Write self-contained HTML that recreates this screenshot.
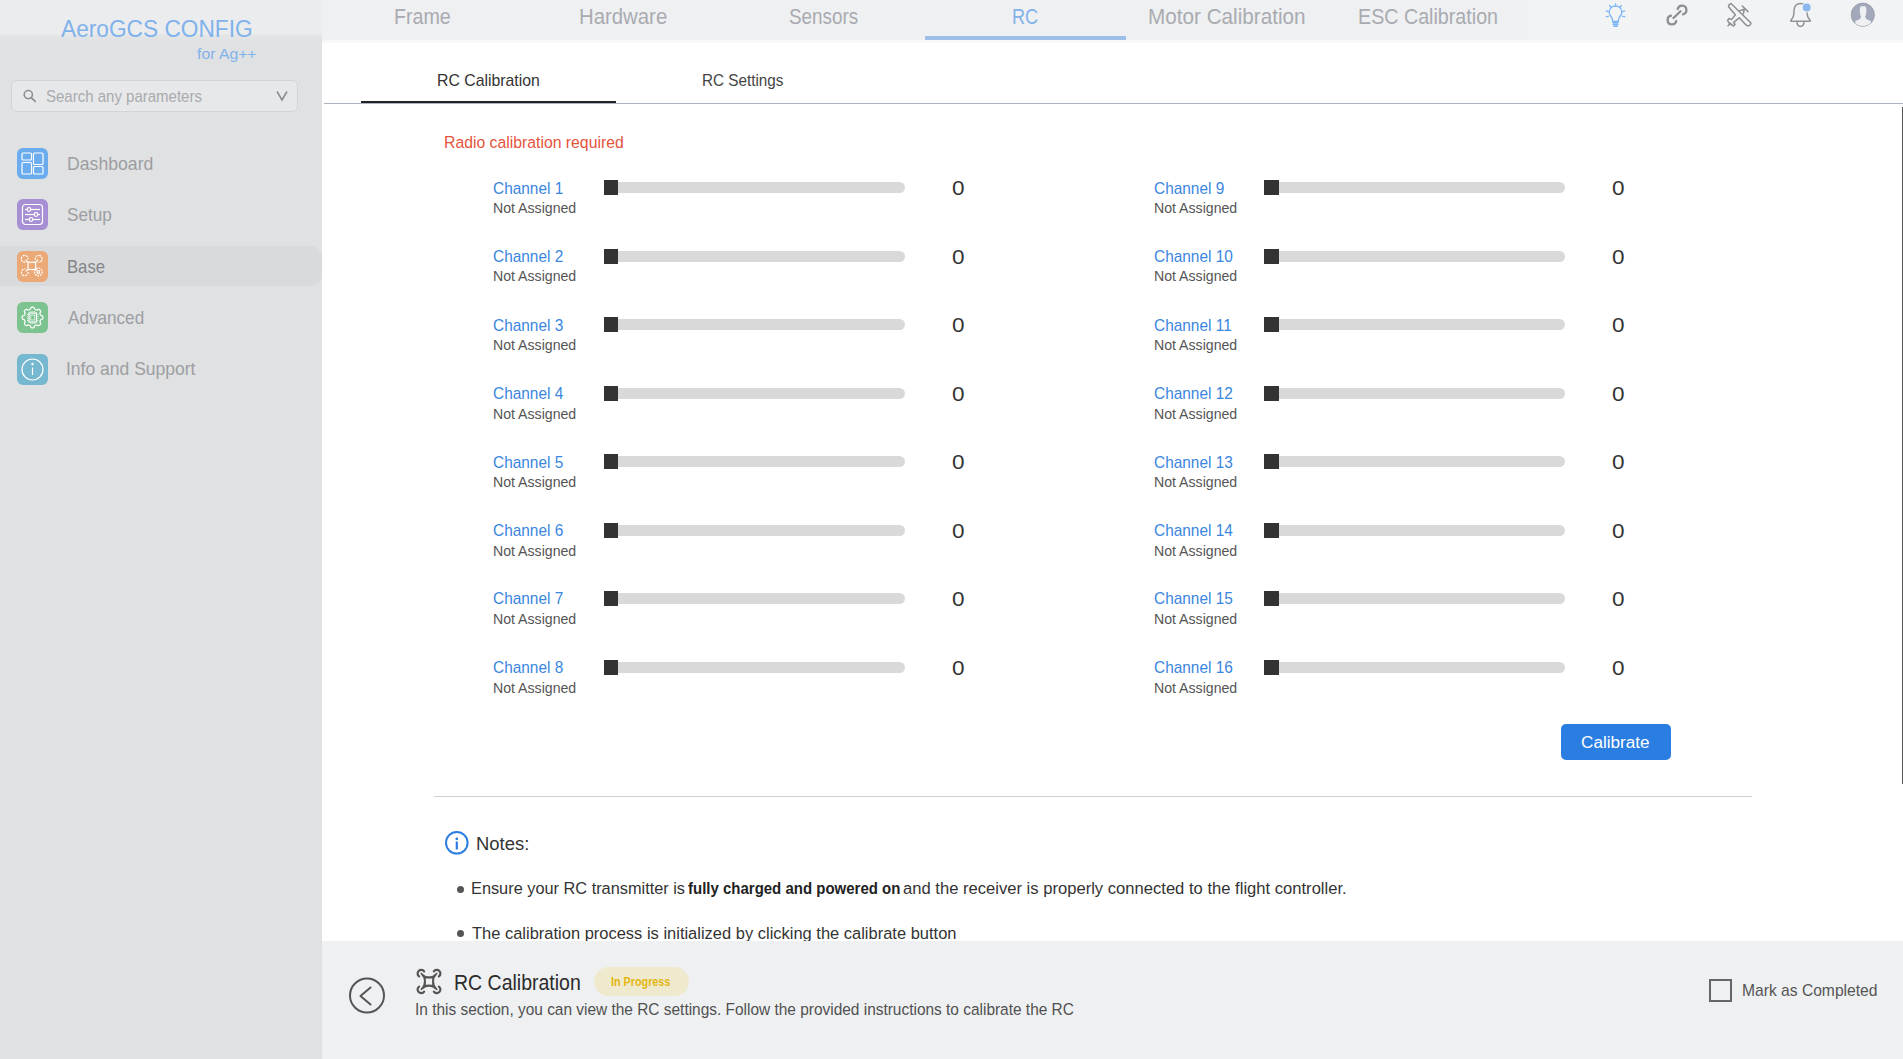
<!DOCTYPE html><html><head><meta charset="utf-8"><style>
html,body{margin:0;padding:0;width:1903px;height:1059px;overflow:hidden;background:#fff;font-family:"Liberation Sans",sans-serif}
div,svg{position:absolute}
.tx{white-space:nowrap;line-height:1;transform-origin:0 0}
b{font-weight:700}
</style></head><body>

<div style="left:0px;top:0px;width:322px;height:1059px;background:#E0E1E3"></div>
<div style="left:0px;top:0px;width:322px;height:34px;background:#EBECEE"></div>
<div style="left:0px;top:34px;width:322px;height:6px;background:linear-gradient(#E6E7E9,#E1E2E4)"></div>
<div style="left:11px;top:80px;width:285px;height:30px;background:#E7E8EA;border:1px solid #D3D4D7;border-radius:6px"></div>
<svg style="left:22px;top:89px" width="16" height="16" viewBox="0 0 16 16"><circle cx="6.3" cy="5.6" r="4.1" fill="none" stroke="#8F9093" stroke-width="1.6"/><line x1="9.2" y1="8.6" x2="13.2" y2="12.4" stroke="#8F9093" stroke-width="1.8" stroke-linecap="round"/></svg>
<svg style="left:275px;top:90px" width="14" height="12" viewBox="0 0 14 12"><polyline points="2,1.5 7,10 12,1.5" fill="none" stroke="#88898C" stroke-width="1.5"/></svg>
<div style="left:0px;top:246px;width:322px;height:40px;background:#D9DADC;border-radius:0 12px 12px 0"></div>
<div style="left:17px;top:148px;width:31px;height:31px;background:#6AACEE;border-radius:6px"></div>
<svg style="left:17px;top:148px" width="31" height="31" viewBox="0 0 31 31" fill="none" stroke="#fff" stroke-width="1.2"><rect x="5" y="5" width="9.5" height="7" rx="1"/><rect x="5" y="14.5" width="9.5" height="11.5" rx="1"/><rect x="16.5" y="5" width="9.5" height="11.5" rx="1"/><rect x="16.5" y="18.5" width="9.5" height="7.5" rx="1"/></svg>
<div style="left:17px;top:199px;width:31px;height:31px;background:#A78FD4;border-radius:6px"></div>
<svg style="left:17px;top:199px" width="31" height="31" viewBox="0 0 31 31" fill="none" stroke="#fff" stroke-width="1.2"><rect x="5.5" y="5.5" width="20" height="20" rx="3"/><line x1="8" y1="10.5" x2="23" y2="10.5"/><line x1="8" y1="15.5" x2="23" y2="15.5"/><line x1="8" y1="20.5" x2="23" y2="20.5"/><circle cx="12" cy="10.5" r="1.8" fill="#A78FD4"/><circle cx="19" cy="15.5" r="1.8" fill="#A78FD4"/><circle cx="14" cy="20.5" r="1.8" fill="#A78FD4"/></svg>
<div style="left:17px;top:251px;width:31px;height:31px;background:#EBA977;border-radius:6px"></div>
<svg style="left:17px;top:251px" width="31" height="31" viewBox="0 0 31 31" fill="none" stroke="#fff" stroke-width="1.2"><rect x="11" y="11.3" width="7.6" height="7.2"/><line x1="11" y1="11.3" x2="8.6" y2="8.6"/><line x1="18.6" y1="11.3" x2="21" y2="8.6"/><line x1="11" y1="18.5" x2="8.6" y2="20.4"/><line x1="18.6" y1="18.5" x2="19.6" y2="19.4"/><path d="M8.6 11 A3.4 3.4 0 1 1 11 8.3" stroke-dasharray="2.2 0.9"/><path d="M18.4 8.6 A3.4 3.4 0 1 1 21.3 11.2" stroke-dasharray="2.2 0.9"/><path d="M11.2 21 A3.4 3.4 0 1 1 8.4 18" stroke-dasharray="2.2 0.9"/><circle cx="21.3" cy="20.9" r="3.9" stroke-dasharray="1.8 0.8"/><circle cx="21.3" cy="20.9" r="1.4"/></svg>
<div style="left:17px;top:302px;width:31px;height:31px;background:#7DC38F;border-radius:6px"></div>
<svg style="left:17px;top:302px" width="31" height="31" viewBox="0 0 31 31" fill="none" stroke="#fff" stroke-width="1.2"><path d="M15.50 5.05 L15.77 5.06 L16.04 5.11 L16.31 5.18 L16.57 5.28 L16.83 5.42 L17.07 5.60 L17.28 5.88 L17.38 6.68 L17.55 6.96 L17.73 7.16 L17.92 7.33 L18.11 7.47 L18.30 7.59 L18.50 7.69 L18.70 7.79 L18.90 7.86 L19.11 7.93 L19.33 7.97 L19.57 8.01 L19.82 8.03 L20.09 8.01 L20.41 7.94 L21.04 7.44 L21.39 7.39 L21.69 7.43 L21.97 7.51 L22.22 7.63 L22.46 7.77 L22.69 7.93 L22.89 8.11 L23.07 8.31 L23.23 8.54 L23.37 8.78 L23.49 9.03 L23.57 9.31 L23.61 9.61 L23.56 9.96 L23.06 10.59 L22.99 10.91 L22.97 11.18 L22.99 11.43 L23.03 11.67 L23.07 11.89 L23.14 12.10 L23.21 12.30 L23.31 12.50 L23.41 12.70 L23.53 12.89 L23.67 13.08 L23.84 13.27 L24.04 13.45 L24.32 13.62 L25.12 13.72 L25.40 13.93 L25.58 14.17 L25.72 14.43 L25.82 14.69 L25.89 14.96 L25.94 15.23 L25.95 15.50 L25.94 15.77 L25.89 16.04 L25.82 16.31 L25.72 16.57 L25.58 16.83 L25.40 17.07 L25.12 17.28 L24.32 17.38 L24.04 17.55 L23.84 17.73 L23.67 17.92 L23.53 18.11 L23.41 18.30 L23.31 18.50 L23.21 18.70 L23.14 18.90 L23.07 19.11 L23.03 19.33 L22.99 19.57 L22.97 19.82 L22.99 20.09 L23.06 20.41 L23.56 21.04 L23.61 21.39 L23.57 21.69 L23.49 21.97 L23.37 22.22 L23.23 22.46 L23.07 22.69 L22.89 22.89 L22.69 23.07 L22.46 23.23 L22.22 23.37 L21.97 23.49 L21.69 23.57 L21.39 23.61 L21.04 23.56 L20.41 23.06 L20.09 22.99 L19.82 22.97 L19.57 22.99 L19.33 23.03 L19.11 23.07 L18.90 23.14 L18.70 23.21 L18.50 23.31 L18.30 23.41 L18.11 23.53 L17.92 23.67 L17.73 23.84 L17.55 24.04 L17.38 24.32 L17.28 25.12 L17.07 25.40 L16.83 25.58 L16.57 25.72 L16.31 25.82 L16.04 25.89 L15.77 25.94 L15.50 25.95 L15.23 25.94 L14.96 25.89 L14.69 25.82 L14.43 25.72 L14.17 25.58 L13.93 25.40 L13.72 25.12 L13.62 24.32 L13.45 24.04 L13.27 23.84 L13.08 23.67 L12.89 23.53 L12.70 23.41 L12.50 23.31 L12.30 23.21 L12.10 23.14 L11.89 23.07 L11.67 23.03 L11.43 22.99 L11.18 22.97 L10.91 22.99 L10.59 23.06 L9.96 23.56 L9.61 23.61 L9.31 23.57 L9.03 23.49 L8.78 23.37 L8.54 23.23 L8.31 23.07 L8.11 22.89 L7.93 22.69 L7.77 22.46 L7.63 22.22 L7.51 21.97 L7.43 21.69 L7.39 21.39 L7.44 21.04 L7.94 20.41 L8.01 20.09 L8.03 19.82 L8.01 19.57 L7.97 19.33 L7.93 19.11 L7.86 18.90 L7.79 18.70 L7.69 18.50 L7.59 18.30 L7.47 18.11 L7.33 17.92 L7.16 17.73 L6.96 17.55 L6.68 17.38 L5.88 17.28 L5.60 17.07 L5.42 16.83 L5.28 16.57 L5.18 16.31 L5.11 16.04 L5.06 15.77 L5.05 15.50 L5.06 15.23 L5.11 14.96 L5.18 14.69 L5.28 14.43 L5.42 14.17 L5.60 13.93 L5.88 13.72 L6.68 13.62 L6.96 13.45 L7.16 13.27 L7.33 13.08 L7.47 12.89 L7.59 12.70 L7.69 12.50 L7.79 12.30 L7.86 12.10 L7.93 11.89 L7.97 11.67 L8.01 11.43 L8.03 11.18 L8.01 10.91 L7.94 10.59 L7.44 9.96 L7.39 9.61 L7.43 9.31 L7.51 9.03 L7.63 8.78 L7.77 8.54 L7.93 8.31 L8.11 8.11 L8.31 7.93 L8.54 7.77 L8.78 7.63 L9.03 7.51 L9.31 7.43 L9.61 7.39 L9.96 7.44 L10.59 7.94 L10.91 8.01 L11.18 8.03 L11.43 8.01 L11.67 7.97 L11.89 7.93 L12.10 7.86 L12.30 7.79 L12.50 7.69 L12.70 7.59 L12.89 7.47 L13.08 7.33 L13.27 7.16 L13.45 6.96 L13.62 6.68 L13.72 5.88 L13.93 5.60 L14.17 5.42 L14.43 5.28 L14.69 5.18 L14.96 5.11 L15.23 5.06 L15.50 5.05Z"/><rect x="12" y="11" width="7.5" height="9"/><rect x="13.8" y="13" width="4" height="5" stroke-width="0.7"/><path d="M11.2 12.5h-1.2M11.2 14.5h-1.2M11.2 16.5h-1.2M11.2 18.5h-1.2M20.3 12.5h1.2M20.3 14.5h1.2M20.3 16.5h1.2M20.3 18.5h1.2M14 10.2v-1.2M15.8 10.2v-1.2M17.6 10.2v-1.2M14 20.8v1.2M15.8 20.8v1.2M17.6 20.8v1.2" stroke-width="0.8"/></svg>
<div style="left:17px;top:354px;width:31px;height:31px;background:#75B8CF;border-radius:6px"></div>
<svg style="left:17px;top:354px" width="31" height="31" viewBox="0 0 31 31" fill="none" stroke="#fff" stroke-width="1.2"><circle cx="15.5" cy="15.5" r="10.5"/><line x1="15.5" y1="13.5" x2="15.5" y2="21"/><circle cx="15.5" cy="10" r="0.6" fill="#fff"/></svg>
<div style="left:322px;top:0px;width:1206px;height:40px;background:#EFF0F2"></div>
<div style="left:1528px;top:0px;width:375px;height:40px;background:#F2F3F5"></div>
<div style="left:322px;top:40px;width:1581px;height:3px;background:#F8F8F9"></div>
<div style="left:925px;top:36px;width:201px;height:4px;background:#9DBFE8"></div>
<svg style="left:1595px;top:0px" width="40" height="30" viewBox="0 0 40 30" fill="none" stroke="#7DB6F5" stroke-width="1.3" stroke-linecap="round">
<path d="M17.6 21.5 v-1.2 c0 -1.6 -0.7 -2.6 -1.6 -3.8 a6.3 6.3 0 1 1 9 0 c-0.9 1.2 -1.6 2.2 -1.6 3.8 v1.2 z"/>
<path d="M18 22.8 h5 M18.2 24.6 h4.6 M18.8 26.2 h3.4" stroke-width="1.5"/>
<line x1="20.5" y1="3.8" x2="20.5" y2="6.3"/><line x1="14.6" y1="5.5" x2="16.2" y2="7.5"/><line x1="26.4" y1="5.5" x2="24.8" y2="7.5"/>
<line x1="11.3" y1="10.8" x2="13.4" y2="11.6"/><line x1="29.7" y1="10.8" x2="27.6" y2="11.6"/><line x1="11.3" y1="16.6" x2="13.4" y2="16.4"/><line x1="29.7" y1="16.6" x2="27.6" y2="16.4"/>
</svg>
<svg style="left:1663px;top:0px" width="28" height="30" viewBox="0 0 28 30" fill="none" stroke="#8E8F92" stroke-width="2.3" stroke-linecap="round">
<path d="M14.7 9 A4.4 4.4 0 1 1 20 14.3"/><path d="M13.3 21 A4.4 4.4 0 1 1 8 15.7"/><line x1="10.5" y1="18" x2="17.5" y2="11.2"/>
</svg>
<svg style="left:1720px;top:0px" width="40" height="32" viewBox="0 0 40 32" fill="none" stroke="#8E8F92" stroke-width="1.5" stroke-linejoin="round" stroke-linecap="round">
<path d="M11 3.5 L30.5 22.5 Q31.5 24 29.5 25.5 Q27.5 26.5 25.5 24.5 L19.3 17.8 L13.6 22.4 L15.1 24.2 L13.6 26 L9 23 L7.6 20.5 L9 18.4 L11.5 19.6 L15.4 14.8 Q11 10 8.5 6.5 Q8.5 4.5 11 3.5 Z"/>
<path d="M19.8 10.6 L24.2 9.3 L23.4 13.8"/><line x1="22.3" y1="6" x2="28" y2="11.6"/><line x1="8" y1="25.8" x2="10.6" y2="23.2"/>
</svg>
<svg style="left:1780px;top:0px" width="40" height="32" viewBox="0 0 40 32" fill="none" stroke="#939497" stroke-width="1.5" stroke-linejoin="round">
<path d="M20.5 3.6 c-4.4 0 -6.3 3.4 -6.5 7 l-0.3 4.2 c-0.2 1.4 -0.6 2.3 -1.3 3.3 l-1.6 2.4 v0.7 h19.4 v-0.7 l-1.6 -2.4 c-0.7 -1 -1.1 -1.9 -1.3 -3.3 l-0.3 -4.2 c-0.2 -3.6 -2.1 -7 -6.5 -7z"/>
<path d="M17 21.6 c0 3 1.6 4.9 3.5 4.9 s3.5 -1.9 3.5 -4.9"/>
<circle cx="26.7" cy="7.4" r="4.6" fill="#8AB8EE" stroke="#F2F3F5" stroke-width="1.2"/>
</svg>
<svg style="left:1848px;top:0px" width="30" height="30" viewBox="0 0 30 30">
<defs><clipPath id="avc"><circle cx="14.8" cy="14.7" r="11.3"/></clipPath></defs>
<circle cx="14.8" cy="14.7" r="11.6" fill="#A3A8BB" stroke="#9A9DA5" stroke-width="0.9"/>
<g clip-path="url(#avc)" fill="#EEF0F2"><path d="M12.2 6.6 c0.8 -0.4 4.4 -0.4 5.2 0 c1 0.6 1 3.5 0.9 6 c-0.1 1.6 -0.6 2.6 -1 3.4 c-0.2 1 0.2 2 1.2 3.2 c1.6 0.8 3.4 1.2 4.5 2.2 L23 28 H6.6 L7.2 21.4 c1.1 -1 2.9 -1.4 4.5 -2.2 c1 -1.2 1.4 -2.2 1.2 -3.2 c-0.4 -0.8 -0.9 -1.8 -1 -3.4 c-0.1 -2.5 -0.1 -5.4 0.9 -6z"/></g>
</svg>
<div style="left:324px;top:103px;width:1579px;height:1px;background:#ADB4BF"></div>
<div style="left:361px;top:101px;width:255px;height:2px;background:#222"></div>
<div style="left:604px;top:182.00px;width:301px;height:11px;background:#D9D9D9;border-radius:6px"></div>
<div style="left:604px;top:180.00px;width:14px;height:15px;background:#333"></div>
<div style="left:604px;top:250.57px;width:301px;height:11px;background:#D9D9D9;border-radius:6px"></div>
<div style="left:604px;top:248.57px;width:14px;height:15px;background:#333"></div>
<div style="left:604px;top:319.14px;width:301px;height:11px;background:#D9D9D9;border-radius:6px"></div>
<div style="left:604px;top:317.14px;width:14px;height:15px;background:#333"></div>
<div style="left:604px;top:387.71px;width:301px;height:11px;background:#D9D9D9;border-radius:6px"></div>
<div style="left:604px;top:385.71px;width:14px;height:15px;background:#333"></div>
<div style="left:604px;top:456.29px;width:301px;height:11px;background:#D9D9D9;border-radius:6px"></div>
<div style="left:604px;top:454.29px;width:14px;height:15px;background:#333"></div>
<div style="left:604px;top:524.86px;width:301px;height:11px;background:#D9D9D9;border-radius:6px"></div>
<div style="left:604px;top:522.86px;width:14px;height:15px;background:#333"></div>
<div style="left:604px;top:593.43px;width:301px;height:11px;background:#D9D9D9;border-radius:6px"></div>
<div style="left:604px;top:591.43px;width:14px;height:15px;background:#333"></div>
<div style="left:604px;top:662.00px;width:301px;height:11px;background:#D9D9D9;border-radius:6px"></div>
<div style="left:604px;top:660.00px;width:14px;height:15px;background:#333"></div>
<div style="left:1264px;top:182.00px;width:301px;height:11px;background:#D9D9D9;border-radius:6px"></div>
<div style="left:1264px;top:180.00px;width:15px;height:15px;background:#333"></div>
<div style="left:1264px;top:250.57px;width:301px;height:11px;background:#D9D9D9;border-radius:6px"></div>
<div style="left:1264px;top:248.57px;width:15px;height:15px;background:#333"></div>
<div style="left:1264px;top:319.14px;width:301px;height:11px;background:#D9D9D9;border-radius:6px"></div>
<div style="left:1264px;top:317.14px;width:15px;height:15px;background:#333"></div>
<div style="left:1264px;top:387.71px;width:301px;height:11px;background:#D9D9D9;border-radius:6px"></div>
<div style="left:1264px;top:385.71px;width:15px;height:15px;background:#333"></div>
<div style="left:1264px;top:456.29px;width:301px;height:11px;background:#D9D9D9;border-radius:6px"></div>
<div style="left:1264px;top:454.29px;width:15px;height:15px;background:#333"></div>
<div style="left:1264px;top:524.86px;width:301px;height:11px;background:#D9D9D9;border-radius:6px"></div>
<div style="left:1264px;top:522.86px;width:15px;height:15px;background:#333"></div>
<div style="left:1264px;top:593.43px;width:301px;height:11px;background:#D9D9D9;border-radius:6px"></div>
<div style="left:1264px;top:591.43px;width:15px;height:15px;background:#333"></div>
<div style="left:1264px;top:662.00px;width:301px;height:11px;background:#D9D9D9;border-radius:6px"></div>
<div style="left:1264px;top:660.00px;width:15px;height:15px;background:#333"></div>
<div style="left:1561px;top:724px;width:110px;height:36px;background:#2A7DE1;border-radius:5px"></div>
<div style="left:434px;top:796px;width:1318px;height:1px;background:#CFCFCF"></div>
<svg style="left:443px;top:829px" width="28" height="28" viewBox="0 0 28 28" fill="none"><circle cx="13.8" cy="13.8" r="10.8" stroke="#2A7DE1" stroke-width="2"/><circle cx="13.8" cy="9.8" r="1.4" fill="#2A7DE1"/><line x1="13.8" y1="12.5" x2="13.8" y2="20.5" stroke="#2A7DE1" stroke-width="2.2"/></svg>
<div style="left:457px;top:885.5px;width:7px;height:7px;border-radius:50%;background:#555"></div>
<div style="left:457px;top:930px;width:7px;height:7px;border-radius:50%;background:#555"></div>
<div style="left:1902px;top:107px;width:1px;height:677px;background:#555"></div>
<div class="tx" style="left:61.00px;top:17.18px;font-size:24.49px;color:#80B2EB;font-weight:400;transform:scaleX(0.9268);">AeroGCS CONFIG</div>
<div class="tx" style="left:197.00px;top:45.56px;font-size:15.22px;color:#80B2EB;font-weight:400;transform:scaleX(1.0351);">for Ag++</div>
<div class="tx" style="left:46.08px;top:88.28px;font-size:16.38px;color:#A9AAAD;font-weight:400;transform:scaleX(0.9172);">Search any parameters</div>
<div class="tx" style="left:66.66px;top:155.19px;font-size:18.84px;color:#9D9EA1;font-weight:400;transform:scaleX(0.9378);">Dashboard</div>
<div class="tx" style="left:66.69px;top:206.39px;font-size:18.84px;color:#9D9EA1;font-weight:400;transform:scaleX(0.9125);">Setup</div>
<div class="tx" style="left:66.81px;top:258.09px;font-size:18.84px;color:#838588;font-weight:400;transform:scaleX(0.8854);">Base</div>
<div class="tx" style="left:67.50px;top:309.39px;font-size:18.84px;color:#9D9EA1;font-weight:400;transform:scaleX(0.9096);">Advanced</div>
<div class="tx" style="left:65.84px;top:360.19px;font-size:18.84px;color:#9D9EA1;font-weight:400;transform:scaleX(0.9299);">Info and Support</div>
<div class="tx" style="left:393.64px;top:5.61px;font-size:21.16px;color:#A9ABB0;font-weight:400;transform:scaleX(0.9293);">Frame</div>
<div class="tx" style="left:578.58px;top:5.61px;font-size:21.16px;color:#A9ABB0;font-weight:400;transform:scaleX(0.9618);">Hardware</div>
<div class="tx" style="left:789.11px;top:5.61px;font-size:21.16px;color:#A9ABB0;font-weight:400;transform:scaleX(0.8921);">Sensors</div>
<div class="tx" style="left:1012.29px;top:5.61px;font-size:21.16px;color:#82B2EA;font-weight:400;transform:scaleX(0.8571);">RC</div>
<div class="tx" style="left:1147.64px;top:5.61px;font-size:21.16px;color:#A9ABB0;font-weight:400;transform:scaleX(0.9778);">Motor Calibration</div>
<div class="tx" style="left:1357.74px;top:5.61px;font-size:21.16px;color:#A9ABB0;font-weight:400;transform:scaleX(0.9306);">ESC Calibration</div>
<div class="tx" style="left:437.09px;top:72.22px;font-size:17.39px;color:#333333;font-weight:400;transform:scaleX(0.9099);">RC Calibration</div>
<div class="tx" style="left:702.12px;top:72.22px;font-size:17.39px;color:#444444;font-weight:400;transform:scaleX(0.8791);">RC Settings</div>
<div class="tx" style="left:444.05px;top:135.43px;font-size:16.67px;color:#E5533D;font-weight:400;transform:scaleX(0.9468);">Radio calibration required</div>
<div class="tx" style="left:493.11px;top:179.82px;font-size:17.39px;color:#3A86E0;font-weight:400;transform:scaleX(0.8872);">Channel 1</div>
<div class="tx" style="left:493.09px;top:199.82px;font-size:15.51px;color:#555555;font-weight:400;transform:scaleX(0.9111);">Not Assigned</div>
<div class="tx" style="left:951.69px;top:178.05px;font-size:20.29px;color:#333333;font-weight:400;transform:scaleX(1.1100);">0</div>
<div class="tx" style="left:493.11px;top:248.25px;font-size:17.39px;color:#3A86E0;font-weight:400;transform:scaleX(0.8872);">Channel 2</div>
<div class="tx" style="left:493.09px;top:268.39px;font-size:15.51px;color:#555555;font-weight:400;transform:scaleX(0.9111);">Not Assigned</div>
<div class="tx" style="left:951.69px;top:246.62px;font-size:20.29px;color:#333333;font-weight:400;transform:scaleX(1.1100);">0</div>
<div class="tx" style="left:493.11px;top:316.68px;font-size:17.39px;color:#3A86E0;font-weight:400;transform:scaleX(0.8872);">Channel 3</div>
<div class="tx" style="left:493.09px;top:336.96px;font-size:15.51px;color:#555555;font-weight:400;transform:scaleX(0.9111);">Not Assigned</div>
<div class="tx" style="left:951.69px;top:315.20px;font-size:20.29px;color:#333333;font-weight:400;transform:scaleX(1.1100);">0</div>
<div class="tx" style="left:493.11px;top:385.10px;font-size:17.39px;color:#3A86E0;font-weight:400;transform:scaleX(0.8872);">Channel 4</div>
<div class="tx" style="left:493.09px;top:405.53px;font-size:15.51px;color:#555555;font-weight:400;transform:scaleX(0.9111);">Not Assigned</div>
<div class="tx" style="left:951.69px;top:383.77px;font-size:20.29px;color:#333333;font-weight:400;transform:scaleX(1.1100);">0</div>
<div class="tx" style="left:493.11px;top:453.53px;font-size:17.39px;color:#3A86E0;font-weight:400;transform:scaleX(0.8872);">Channel 5</div>
<div class="tx" style="left:493.09px;top:474.10px;font-size:15.51px;color:#555555;font-weight:400;transform:scaleX(0.9111);">Not Assigned</div>
<div class="tx" style="left:951.69px;top:452.34px;font-size:20.29px;color:#333333;font-weight:400;transform:scaleX(1.1100);">0</div>
<div class="tx" style="left:493.11px;top:521.96px;font-size:17.39px;color:#3A86E0;font-weight:400;transform:scaleX(0.8872);">Channel 6</div>
<div class="tx" style="left:493.09px;top:542.67px;font-size:15.51px;color:#555555;font-weight:400;transform:scaleX(0.9111);">Not Assigned</div>
<div class="tx" style="left:951.69px;top:520.91px;font-size:20.29px;color:#333333;font-weight:400;transform:scaleX(1.1100);">0</div>
<div class="tx" style="left:493.11px;top:590.39px;font-size:17.39px;color:#3A86E0;font-weight:400;transform:scaleX(0.8872);">Channel 7</div>
<div class="tx" style="left:493.09px;top:611.25px;font-size:15.51px;color:#555555;font-weight:400;transform:scaleX(0.9111);">Not Assigned</div>
<div class="tx" style="left:951.69px;top:589.48px;font-size:20.29px;color:#333333;font-weight:400;transform:scaleX(1.1100);">0</div>
<div class="tx" style="left:493.11px;top:658.82px;font-size:17.39px;color:#3A86E0;font-weight:400;transform:scaleX(0.8872);">Channel 8</div>
<div class="tx" style="left:493.09px;top:679.82px;font-size:15.51px;color:#555555;font-weight:400;transform:scaleX(0.9111);">Not Assigned</div>
<div class="tx" style="left:951.69px;top:658.05px;font-size:20.29px;color:#333333;font-weight:400;transform:scaleX(1.1100);">0</div>
<div class="tx" style="left:1153.61px;top:179.82px;font-size:17.39px;color:#3A86E0;font-weight:400;transform:scaleX(0.8872);">Channel 9</div>
<div class="tx" style="left:1153.59px;top:199.82px;font-size:15.51px;color:#555555;font-weight:400;transform:scaleX(0.9111);">Not Assigned</div>
<div class="tx" style="left:1611.69px;top:178.05px;font-size:20.29px;color:#333333;font-weight:400;transform:scaleX(1.1100);">0</div>
<div class="tx" style="left:1153.61px;top:248.25px;font-size:17.39px;color:#3A86E0;font-weight:400;transform:scaleX(0.8872);">Channel 10</div>
<div class="tx" style="left:1153.59px;top:268.39px;font-size:15.51px;color:#555555;font-weight:400;transform:scaleX(0.9111);">Not Assigned</div>
<div class="tx" style="left:1611.69px;top:246.62px;font-size:20.29px;color:#333333;font-weight:400;transform:scaleX(1.1100);">0</div>
<div class="tx" style="left:1153.61px;top:316.68px;font-size:17.39px;color:#3A86E0;font-weight:400;transform:scaleX(0.8872);">Channel 11</div>
<div class="tx" style="left:1153.59px;top:336.96px;font-size:15.51px;color:#555555;font-weight:400;transform:scaleX(0.9111);">Not Assigned</div>
<div class="tx" style="left:1611.69px;top:315.20px;font-size:20.29px;color:#333333;font-weight:400;transform:scaleX(1.1100);">0</div>
<div class="tx" style="left:1153.61px;top:385.10px;font-size:17.39px;color:#3A86E0;font-weight:400;transform:scaleX(0.8872);">Channel 12</div>
<div class="tx" style="left:1153.59px;top:405.53px;font-size:15.51px;color:#555555;font-weight:400;transform:scaleX(0.9111);">Not Assigned</div>
<div class="tx" style="left:1611.69px;top:383.77px;font-size:20.29px;color:#333333;font-weight:400;transform:scaleX(1.1100);">0</div>
<div class="tx" style="left:1153.61px;top:453.53px;font-size:17.39px;color:#3A86E0;font-weight:400;transform:scaleX(0.8872);">Channel 13</div>
<div class="tx" style="left:1153.59px;top:474.10px;font-size:15.51px;color:#555555;font-weight:400;transform:scaleX(0.9111);">Not Assigned</div>
<div class="tx" style="left:1611.69px;top:452.34px;font-size:20.29px;color:#333333;font-weight:400;transform:scaleX(1.1100);">0</div>
<div class="tx" style="left:1153.61px;top:521.96px;font-size:17.39px;color:#3A86E0;font-weight:400;transform:scaleX(0.8872);">Channel 14</div>
<div class="tx" style="left:1153.59px;top:542.67px;font-size:15.51px;color:#555555;font-weight:400;transform:scaleX(0.9111);">Not Assigned</div>
<div class="tx" style="left:1611.69px;top:520.91px;font-size:20.29px;color:#333333;font-weight:400;transform:scaleX(1.1100);">0</div>
<div class="tx" style="left:1153.61px;top:590.39px;font-size:17.39px;color:#3A86E0;font-weight:400;transform:scaleX(0.8872);">Channel 15</div>
<div class="tx" style="left:1153.59px;top:611.25px;font-size:15.51px;color:#555555;font-weight:400;transform:scaleX(0.9111);">Not Assigned</div>
<div class="tx" style="left:1611.69px;top:589.48px;font-size:20.29px;color:#333333;font-weight:400;transform:scaleX(1.1100);">0</div>
<div class="tx" style="left:1153.61px;top:658.82px;font-size:17.39px;color:#3A86E0;font-weight:400;transform:scaleX(0.8872);">Channel 16</div>
<div class="tx" style="left:1153.59px;top:679.82px;font-size:15.51px;color:#555555;font-weight:400;transform:scaleX(0.9111);">Not Assigned</div>
<div class="tx" style="left:1611.69px;top:658.05px;font-size:20.29px;color:#333333;font-weight:400;transform:scaleX(1.1100);">0</div>
<div class="tx" style="left:1581.41px;top:733.94px;font-size:17.25px;color:#FFFFFF;font-weight:400;transform:scaleX(0.9941);">Calibrate</div>
<div class="tx" style="left:475.81px;top:834.51px;font-size:18.7px;color:#333333;font-weight:400;transform:scaleX(0.9863);">Notes:</div>
<div class="tx" style="left:470.65px;top:879.67px;font-size:17.1px;color:#333333;font-weight:400;transform:scaleX(0.9547);">Ensure your RC transmitter is</div>
<div class="tx" style="left:688.00px;top:879.67px;font-size:17.1px;color:#222222;font-weight:700;transform:scaleX(0.8768);">fully charged and powered on</div>
<div class="tx" style="left:902.63px;top:879.67px;font-size:17.1px;color:#333333;font-weight:400;transform:scaleX(0.9708);">and the receiver is properly connected to the flight controller.</div>
<div class="tx" style="left:471.60px;top:925.47px;font-size:17.1px;color:#333333;font-weight:400;transform:scaleX(0.9639);">The calibration process is initialized by clicking the calibrate button</div>
<div style="left:322px;top:941px;width:1581px;height:118px;background:#EFF0F2"></div>
<svg style="left:347px;top:976px" width="40" height="40" viewBox="0 0 40 40" fill="none" stroke="#555" stroke-width="2"><circle cx="20" cy="19.5" r="17"/><polyline points="23.5,11.5 13.5,20 23.5,28.5" stroke-linecap="round" stroke-linejoin="round"/></svg>
<svg style="left:405px;top:960px" width="45" height="40" viewBox="0 0 45 40" fill="none" stroke="#555" stroke-linecap="round">
<path d="M16.2 13.5 Q24 21.3 31.8 13.5 M16.2 29.5 Q24 21.7 31.8 29.5 M16.2 13.5 Q23.8 21.5 16.2 29.5 M31.8 13.5 Q24.2 21.5 31.8 29.5" stroke-width="1.5"/>
<rect x="19.8" y="17.6" width="8.4" height="8" stroke-width="1.8"/>
<path d="M14.14 16.45 A3.6 3.6 0 1 1 19.15 11.44 M28.85 11.44 A3.6 3.6 0 1 1 33.86 16.45 M33.86 26.55 A3.6 3.6 0 1 1 28.85 31.56 M19.15 31.56 A3.6 3.6 0 1 1 14.14 26.55" stroke-width="2.2"/>
</svg>
<div style="left:594px;top:967px;width:95px;height:29px;background:#EFEACD;border-radius:14.5px"></div>
<div style="left:1709px;top:979px;width:19px;height:19px;border:2px solid #666"></div>
<div class="tx" style="left:453.96px;top:971.71px;font-size:21.16px;color:#2B2B2B;font-weight:400;transform:scaleX(0.9216);">RC Calibration</div>
<div class="tx" style="left:610.66px;top:975.83px;font-size:12.9px;color:#E3B60F;font-weight:700;transform:scaleX(0.8371);">In Progress</div>
<div class="tx" style="left:414.73px;top:1002.25px;font-size:15.94px;color:#505050;font-weight:400;transform:scaleX(0.9685);">In this section, you can view the RC settings. Follow the provided instructions to calibrate the RC</div>
<div class="tx" style="left:1742.35px;top:981.88px;font-size:16.38px;color:#555555;font-weight:400;transform:scaleX(0.9550);">Mark as Completed</div>
</body></html>
